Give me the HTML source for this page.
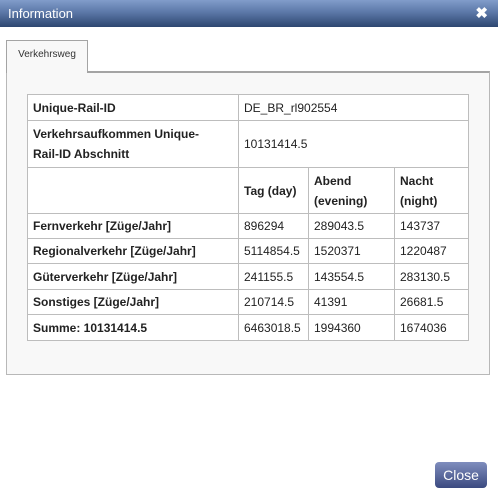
<!DOCTYPE html>
<html><head><style>
body{margin:0;width:498px;height:499px;background:#fff;font-family:"Liberation Sans",sans-serif;position:relative;overflow:hidden}
.tb{position:absolute;left:0;top:0;width:498px;height:27px;background:linear-gradient(#819cca,#5c78a8 45%,#2d4670);color:#fff;font-size:13px;line-height:27px}
.tb span{position:absolute;left:8px}
.x{position:absolute;right:10px;top:6px;color:#fff;font-weight:bold;font-size:15px;line-height:15px}
.panel{position:absolute;left:6px;top:71px;width:482px;height:301px;border:1px solid #b8b8b8;border-top:2px solid #a4a4a4;background:#f8f8f8}
.tab{position:absolute;left:6px;top:40px;width:80px;height:32px;border:1px solid #a4a4a4;border-bottom:none;background:#f8f8f8;font-size:10px;color:#333;line-height:28px;text-align:center;z-index:2}
table{position:absolute;left:27px;top:94px;border-collapse:collapse;background:#fff;font-size:12px;color:#222}
td{border:1px solid #bdbdbd;padding:0 5px;line-height:20px;vertical-align:middle}
td.b{font-weight:bold}
.btn{position:absolute;left:435px;top:462px;width:52px;height:26px;border-radius:4px;background:linear-gradient(#7f8dbd,#3b4a80);color:#fff;font-size:14px;text-align:center;line-height:26px}
</style></head><body>
<div class="tb"><span>Information</span><div class="x">✖</div></div>
<div class="tab">Verkehrsweg</div>
<div class="panel"></div>
<table>
<colgroup><col style="width:211px"><col style="width:70px"><col style="width:86px"><col style="width:74px"></colgroup>
<tr style="height:26px"><td class="b">Unique-Rail-ID</td><td colspan="3">DE_BR_rl902554</td></tr>
<tr style="height:47px"><td class="b">Verkehrsaufkommen Unique-<br>Rail-ID Abschnitt</td><td colspan="3">10131414.5</td></tr>
<tr style="height:46px"><td></td><td class="b">Tag (day)</td><td class="b">Abend (evening)</td><td class="b">Nacht (night)</td></tr>
<tr style="height:25px"><td class="b">Fernverkehr [Züge/Jahr]</td><td>896294</td><td>289043.5</td><td>143737</td></tr>
<tr style="height:25px"><td class="b">Regionalverkehr [Züge/Jahr]</td><td>5114854.5</td><td>1520371</td><td>1220487</td></tr>
<tr style="height:26px"><td class="b">Güterverkehr [Züge/Jahr]</td><td>241155.5</td><td>143554.5</td><td>283130.5</td></tr>
<tr style="height:25px"><td class="b">Sonstiges [Züge/Jahr]</td><td>210714.5</td><td>41391</td><td>26681.5</td></tr>
<tr style="height:26px"><td class="b">Summe: 10131414.5</td><td>6463018.5</td><td>1994360</td><td>1674036</td></tr>
</table>
<div class="btn">Close</div>
</body></html>
